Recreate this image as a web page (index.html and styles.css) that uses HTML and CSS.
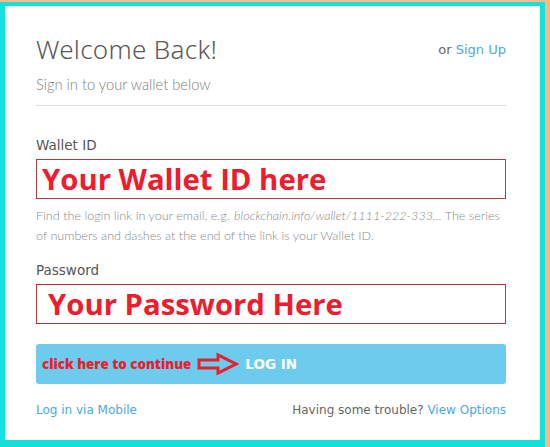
FILE: index.html
```html
<!DOCTYPE html>
<html>
<head>
<meta charset="utf-8">
<link rel="stylesheet" href="styles.css">
</head>
<body>
<div class="frame">
  <div class="card">
    <div class="header">
      <div class="titles">
        <h1 class="title">Welcome Back!</h1>
        <p class="subtitle">Sign in to your wallet below</p>
      </div>
      <div class="signup">or <a class="link">Sign Up</a></div>
    </div>
    <hr class="divider">
    <label class="label">Wallet ID</label>
    <div class="input"><span class="ann">Your Wallet ID here</span></div>
    <p class="help">Find the login link in your email, e.g. <em class="example">blockchain.info/wallet/1111-222-333...</em> The series of numbers and dashes at the end of the link is your Wallet ID.</p>
    <label class="label label-pw">Password</label>
    <div class="input input-pw"><span class="ann">Your Password Here</span></div>
    <div class="button">
      <span class="click">click here to continue</span>
      <svg class="arrow" width="42" height="24" viewBox="0 0 42 24">
        <path d="M2 8 H21 V3 L39 12 L21 21 V16 H2 Z" fill="none" stroke="#e8202c" stroke-width="3" stroke-linejoin="miter"/>
      </svg>
      <span class="login">LOG IN</span>
    </div>
    <div class="footer">
      <a class="link">Log in via Mobile</a>
      <span class="trouble">Having some trouble? <a class="link">View Options</a></span>
    </div>
  </div>
</div>
</body>
</html>
```
FILE: styles.css
```css
html, body {
  margin: 0;
  padding: 0;
}
body {
  background: #f9b98a;
  width: 550px;
  height: 447px;
  overflow: hidden;
}
.frame {
  margin-top: 2px;
  width: 535px;
  height: 434px;
  background: #12e2d9;
  padding: 4px 5px 7px 5px;
}
.card {
  background: #fff;
  height: 434px;
  box-sizing: border-box;
  padding: 0 34px 0 31px;
  display: flex;
  flex-direction: column;
  font-family: "DejaVu Sans", sans-serif;
  color: #5b5b5b;
}
.header {
  display: flex;
  justify-content: space-between;
  align-items: flex-start;
  padding-top: 27px;
}
.title {
  margin: 0;
  font-size: 26px;
  font-weight: 300;
  line-height: 32px;
  color: #5a5a5a;
  font-family: "Noto Sans", sans-serif;
  letter-spacing: 0.3px;
}
.subtitle {
  margin: 10px 0 0 0;
  font-family: "Lato", sans-serif;
  font-size: 14.7px;
  font-weight: 300;
  color: #808080;
  line-height: 18px;
}
.signup {
  margin-top: 9px;
  font-size: 13px;
  font-family: "DejaVu Sans", sans-serif;
  color: #666;
}
.link {
  color: #4aa8e2;
}
.divider {
  margin: 12px 0 0 0;
  border: 0;
  border-top: 1px solid #dcdcdc;
  height: 0;
}
.label {
  margin-top: 31px;
  font-size: 13.5px;
  font-family: "DejaVu Sans", sans-serif;
  color: #555;
  line-height: 17px;
}
.input {
  margin-top: 5px;
  height: 40px;
  box-sizing: border-box;
  border: 1px solid #b23a3a;
  display: flex;
  align-items: center;
  padding-left: 5px;
}
.input-pw {
  padding-left: 11px;
}
.ann {
  font-family: "Open Sans", sans-serif;
  font-weight: 700;
  font-size: 29.3px;
  color: #ee1c2c;
  line-height: 34px;
}
.help {
  margin: 7px 0 0 0;
  font-family: "Lato", sans-serif;
  font-weight: 300;
  font-size: 12.6px;
  line-height: 20px;
  color: #8a8a8a;
}
.example {
  padding-left: 1px;
}
.label-pw {
  margin-top: 16px;
}
.button {
  margin-top: 20px;
  height: 40px;
  background: #6dcbed;
  border-radius: 3px;
  display: flex;
  align-items: center;
  padding-left: 6px;
}
.click {
  font-family: "Open Sans", sans-serif;
  font-weight: 800;
  font-size: 13.3px;
  color: #e8202c;
}
.arrow {
  margin-left: 6px;
}
.login {
  margin-left: 6px;
  color: #fff;
  font-weight: 700;
  font-size: 13.5px;
  font-family: "DejaVu Sans", sans-serif;
}
.footer {
  margin-top: 19px;
  display: flex;
  justify-content: space-between;
  font-size: 12px;
  font-family: "DejaVu Sans", sans-serif;
  color: #666;
}
```
